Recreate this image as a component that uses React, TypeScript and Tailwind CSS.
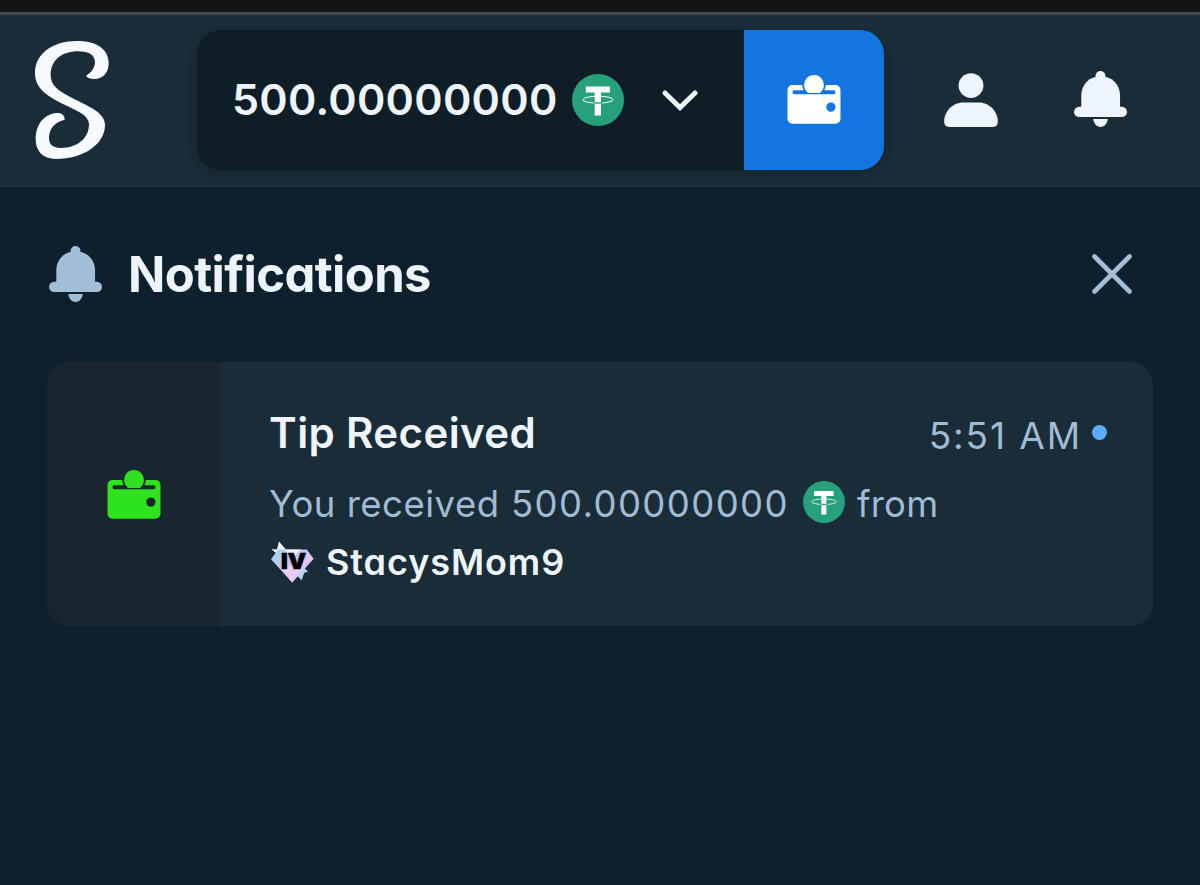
import clsx from "clsx";

type IconProps = { className?: string };

const NOTIFICATIONS = [
    { title: "Tip Received", time: "5:51 AM", amount: "500.00000000", from: "StacysMom9", unread: true },
];

function Logo({ className }: IconProps) {
    return (
        <svg viewBox="105 120 222 354" fill="currentColor" className={className}>
            <path d="M258 225C274 214 285 200 285 184C285 162 266 151 235 151C185 151 152 178 152 222C152 252 172 268 215 290C270 318 315 335 315 372C315 430 250 474 168 474C128 474 107 450 107 415C107 368 135 336 175 336C186 336 195 345 194 356C168 362 147 380 147 412C147 432 160 441 182 441C235 441 267 410 267 370C267 345 240 333 200 314C140 286 105 262 105 216C105 160 155 120 232 120C290 120 326 145 326 186C326 215 310 234 282 234C270 234 262 231 258 225Z" />
        </svg>
    );
}

function WalletIcon({ className }: IconProps) {
    return (
        <svg viewBox="140 165 162 148" fill="currentColor" className={className}>
            <path
                fillRule="evenodd"
                d="M156 195H185Q186 204 190 211H162a6 6 0 0 0 0 12H280a6 6 0 0 0 0-12H252Q256 204 257 195H286a15 15 0 0 1 15 15V297a15 15 0 0 1-15 15H156a15 15 0 0 1-15-15V210a15 15 0 0 1 15-15ZM258 262a14 14 0 1 0 28 0a14 14 0 1 0-28 0Z"
            />
            <path d="M203 219A30 30 0 1 1 239 219Z" />
        </svg>
    );
}

function UserIcon({ className }: IconProps) {
    return (
        <svg viewBox="73 68 162 163" fill="currentColor" className={className}>
            <circle cx="154" cy="106" r="37.5" />
            <path d="M130 157H178C210 157 235 185 235 214Q235 231 220 231H88Q73 231 73 214C73 185 98 157 130 157Z" />
        </svg>
    );
}

function BellIcon({ className }: IconProps) {
    return (
        <svg viewBox="461 62 160 169" fill="currentColor" className={className}>
            <circle cx="541" cy="77" r="15" />
            <path d="M483 136C483 102 508 78 541.500 78S600 102 600 136V180H483Z" />
            <rect x="461" y="170" width="160" height="31" rx="15.500" />
            <path d="M519 207H563C561 221 553 231 541 231S521 221 519 207Z" />
        </svg>
    );
}

function TetherIcon({ className }: IconProps) {
    return (
        <svg viewBox="0 0 158 158" className={className}>
            <circle cx="79" cy="79" r="79" fill="#26a17b" />
            <ellipse cx="79" cy="78" rx="46" ry="10.500" fill="none" stroke="#fff" strokeWidth="3" />
            <path d="M42 38H115V56H88V126H69V56H42Z" fill="#fff" />
            <path d="M66 85.500Q79 86.500 92 85.500V90Q79 91 66 90Z" fill="#26a17b" />
        </svg>
    );
}

function ChevronIcon({ className }: IconProps) {
    return (
        <svg viewBox="0 0 36 22" fill="none" stroke="currentColor" strokeWidth="5" strokeLinecap="round" className={className}>
            <path d="M3 3L18 17.500L33 3" />
        </svg>
    );
}

function CloseIcon({ className }: IconProps) {
    return (
        <svg viewBox="0 0 40 40" fill="none" stroke="currentColor" strokeWidth="4.600" strokeLinecap="round" className={className}>
            <path d="M2.500 2.500L37.500 37.500M37.500 2.500L2.500 37.500" />
        </svg>
    );
}

function RankBadge({ className }: IconProps) {
    return (
        <svg viewBox="48 428 130 126" className={className}>
            <defs>
                <linearGradient id="gem" x1="0" y1="0" x2="1" y2="1">
                    <stop offset="0" stopColor="#9fdcf5" />
                    <stop offset="0.35" stopColor="#b9c6f6" />
                    <stop offset="0.6" stopColor="#e6c8f3" />
                    <stop offset="1" stopColor="#c9b6ef" />
                </linearGradient>
            </defs>
            <path d="M49 452L66 453L72 429L94 454L68 468Z" fill="#f4f6fd" />
            <path d="M138 500L160 520L148 524L141 546L124 530Z" fill="#a9dcf3" />
            <path d="M70 453H156L177 481L112 553L48 483Z" fill="url(#gem)" />
            <path d="M90 453H140L112 478Z" fill="#eef0fd" />
            <path d="M82 515L112 496L140 515L112 553Z" fill="#ecccf6" />
            <text x="116" y="513" textAnchor="middle" textLength="76" lengthAdjust="spacingAndGlyphs" fontSize="66" fontWeight="900" fill="#000" stroke="#000" strokeWidth="2">
                IV
            </text>
        </svg>
    );
}

function Header() {
    return (
        <header className="flex h-[172px] items-start bg-[#192c38] pt-[14.5px] text-[#edf4fb]">
            <Logo className="mt-[11px] ml-[35px] h-[118px] w-[74px] text-[#f7fafe]" />
            <div className="ml-[88px] flex h-[140px] w-[687px] overflow-hidden rounded-3xl shadow-[0_4px_10px_rgba(0,0,0,0.14)]">
                <button className="flex w-[547px] items-center bg-[#0f1d26] pl-[35px]">
                    <span className="w-[340px] text-left text-[43px] font-semibold tracking-[0.3px]">500.00000000</span>
                    <TetherIcon className="size-[52px] shrink-0" />
                    <ChevronIcon className="mt-0.5 ml-[38px] h-[22px] w-9 shrink-0" />
                </button>
                <button className="flex w-[140px] items-center justify-center bg-[#1475e1] text-white">
                    <WalletIcon className="h-[49px] w-[54px]" />
                </button>
            </div>
            <UserIcon className="mt-[43px] ml-[60px] size-[54px]" />
            <BellIcon className="mt-[41px] ml-[76px] h-14 w-[53px]" />
        </header>
    );
}

export default function App() {
    return (
        <div className="h-[885px] w-[1200px] overflow-hidden bg-[#0e202d] font-['Inter',sans-serif] whitespace-nowrap [font-feature-settings:'cv11']">
            <div className="h-[15px] border-b-[3px] border-[#42484b] bg-[#141414]" />
            <Header />

            <div className="mt-[57px] flex h-[60px] items-center pr-[68px] pl-[49px]">
                <BellIcon className="h-14 w-[53px] text-[#a3bfd7]" />
                <h1 className="mt-0.5 ml-[26px] text-[49px] font-bold tracking-[-0.6px] text-[#edf4fb]">Notifications</h1>
                <CloseIcon className="ml-auto size-10 text-[#a3bfd7]" />
            </div>

            <div className="mt-[58px] mr-[47px] ml-[47px]">
                {NOTIFICATIONS.map((item) => (
                    <div key={item.from} className="flex h-[264px] overflow-hidden rounded-[22px] bg-[#192c38]">
                        <div className="flex w-[174px] items-center justify-center bg-[#19252f]">
                            <WalletIcon className="h-[49px] w-[54px] text-[#2ee31d]" />
                        </div>
                        <div className="flex-1 pt-[43px] pr-[46px] pl-12 text-[#a0bcd5]">
                            <div className="mb-3 flex h-[58px] items-center">
                                <span className="-mt-1 text-[42px] font-semibold tracking-[0.4px] text-[#edf4fb]">{item.title}</span>
                                <span className="ml-auto pt-1 text-[37px] tracking-[1.9px]">{item.time}</span>
                                <span className={clsx("mb-1 ml-2.5 size-[15px] rounded-full", item.unread && "bg-[#5cacff]")} />
                            </div>
                            <div className="flex h-[58px] items-center text-[36.5px]">
                                <span className="w-[229px] tracking-[0.5px]">You received</span>
                                <span className="ml-[13px] w-[292px] tracking-[1.4px]">{item.amount}</span>
                                <TetherIcon className="mb-1 size-[42px]" />
                                <span className="ml-3 tracking-[0.2px]">from</span>
                            </div>
                            <div className="flex h-[58px] items-center">
                                <RankBadge className="ml-0.5 h-[42px] w-[43px]" />
                                <span className="ml-3 text-[36px] font-semibold tracking-[0.9px] text-[#edf4fb]">{item.from}</span>
                            </div>
                        </div>
                    </div>
                ))}
            </div>
        </div>
    );
}
